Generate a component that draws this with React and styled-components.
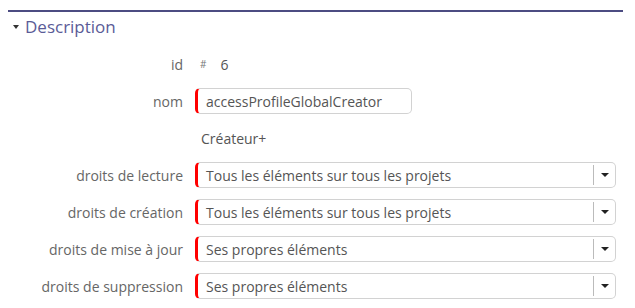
import React from 'react'
import styled, { createGlobalStyle } from 'styled-components'

const GlobalStyle = createGlobalStyle`
body {
  margin: 0;
  padding: 10px 12px 0 8px;
  background: #fff;
  font-family: "Open Sans", "Liberation Sans", sans-serif;
  font-size: 14px;
  color: #555;
}
`

const Section = styled.section`
border-top: 2px solid #4c4c82;
`

const Heading = styled.div`
display: flex;
align-items: center;
gap: 6px;
height: 29px;
padding-left: 5px;
margin-bottom: 10px;
color: #5a5b97;
font-size: 17px;
`

const Caret = styled.span`
width: 0;
height: 0;
border-left: 3px solid transparent;
border-right: 3px solid transparent;
border-top: 4px solid #333;
`

const Form = styled.div`
display: flex;
flex-direction: column;
gap: 11px;
`

const Row = styled.div`
display: grid;
grid-template-columns: 175px 1fr;
column-gap: 12px;
align-items: center;
height: 26px;
`

const Label = styled.div`
text-align: right;
color: #666;
white-space: nowrap;
`

const Value = styled.div`
padding-left: ${p => p.$inset || 8}px;
color: #555;
display: flex;
align-items: center;
gap: 14px;
`

const Hash = styled.span`
font-size: 10px;
color: #777;
`

const Field = styled.div`
box-sizing: border-box;
height: 26px;
width: ${p => p.width}px;
display: flex;
align-items: center;
border: 1px solid #d2d2d2;
border-left: 3px solid #f00;
border-radius: 5px;
padding-left: 8px;
color: #555;
background: #fff;
white-space: nowrap;
`

const FieldText = styled.span`
flex: 1;
`

const Toggle = styled.div`
display: flex;
align-items: center;
justify-content: center;
width: 21px;
height: 20px;
border-left: 1px solid #bbb;
`

const Arrow = styled.span`
width: 0;
height: 0;
border-left: 4px solid transparent;
border-right: 4px solid transparent;
border-top: 4px solid #222;
`

function Select({ value }) {
  return (
    <Field width={421}>
      <FieldText>{value}</FieldText>
      <Toggle><Arrow /></Toggle>
    </Field>
  )
}

const rights = [
  ['droits de lecture', 'Tous les éléments sur tous les projets'],
  ['droits de création', 'Tous les éléments sur tous les projets'],
  ['droits de mise à jour', 'Ses propres éléments'],
  ['droits de suppression', 'Ses propres éléments'],
]

export default function App() {
  return (
    <>
      <GlobalStyle />
      <Section>
        <Heading><Caret />Description</Heading>
        <Form>
          <Row>
            <Label>id</Label>
            <Value $inset={5}><Hash>#</Hash>6</Value>
          </Row>
          <Row>
            <Label>nom</Label>
            <Field width={217}>accessProfileGlobalCreator</Field>
          </Row>
          <Row>
            <span />
            <Value $inset={6}>Créateur+</Value>
          </Row>
          {rights.map(([label, value]) => (
            <Row key={label}>
              <Label>{label}</Label>
              <Select value={value} />
            </Row>
          ))}
        </Form>
      </Section>
    </>
  )
}
